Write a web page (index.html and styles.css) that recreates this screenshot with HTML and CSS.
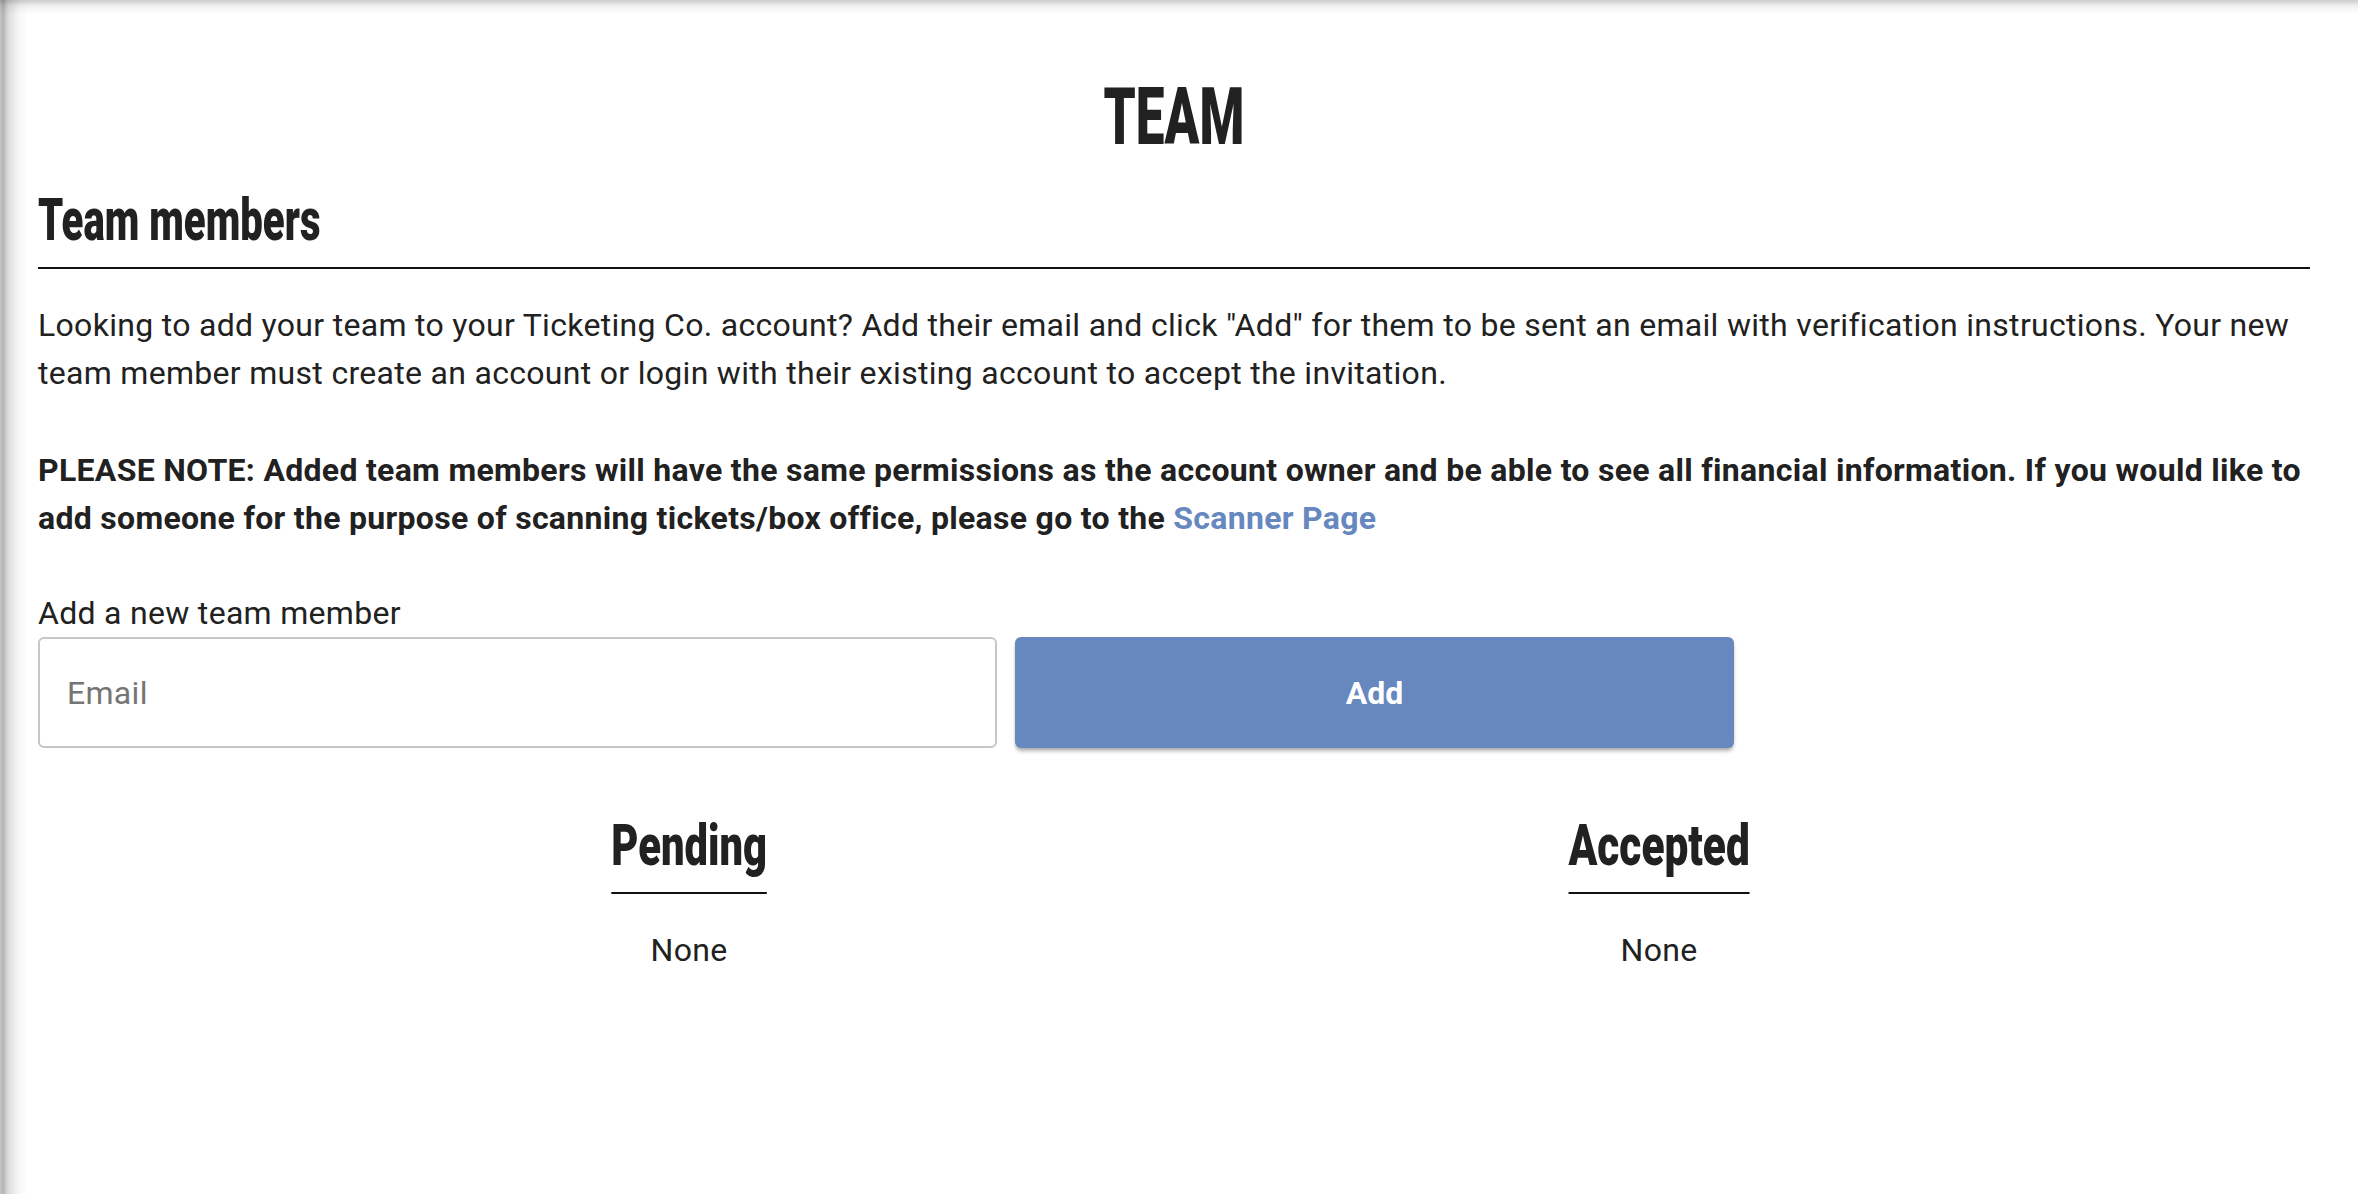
FILE: index.html
```html
<!DOCTYPE html>
<html lang="en">
<head>
<meta charset="utf-8">
<title>Team</title>
<link rel="stylesheet" href="styles.css">
</head>
<body>
<div class="page">
  <main class="content">
    <h1 class="title"><span class="cond cond-team">TEAM</span></h1>
    <h2 class="section-title"><span class="cond cond-members">Team members</span></h2>
    <p class="intro">Looking to add your team to your Ticketing Co. account? Add their email and click "Add" for them to be sent an email with verification instructions. Your new team member must create an account or login with their existing account to accept the invitation.</p>
    <p class="note">PLEASE NOTE: Added team members will have the same permissions as the account owner and be able to see all financial information. If you would like to add someone for the purpose of scanning tickets/box office, please go to the <a class="link" href="#">Scanner Page</a></p>
    <form class="add-form">
      <label class="add-label" for="email">Add a new team member</label>
      <div class="add-row">
        <input class="email-input" id="email" type="email" placeholder="Email">
        <button class="add-btn" type="button">Add</button>
      </div>
    </form>
    <div class="lists">
      <section class="list">
        <h3 class="list-title cond cond-pending">Pending</h3>
        <p class="list-empty">None</p>
      </section>
      <section class="list">
        <h3 class="list-title cond cond-accepted">Accepted</h3>
        <p class="list-empty">None</p>
      </section>
    </div>
  </main>
</div>
</body>
</html>
```
FILE: styles.css
```css
html, body {
  margin: 0;
  height: 100%;
}
body {
  font-family: Roboto, "Liberation Sans", sans-serif;
  color: #212121;
  background: #fff;
}
.page {
  min-height: 100vh;
  box-sizing: border-box;
  padding: 77px 48px 0 38px;
  background:
    linear-gradient(to bottom, rgba(0,0,0,0.2), rgba(0,0,0,0.06) 6px, rgba(0,0,0,0)) top left / 100% 14px no-repeat,
    linear-gradient(to right, rgba(0,0,0,0.22) 0, rgba(0,0,0,0.3) 3px, rgba(0,0,0,0.14) 8px, rgba(0,0,0,0.04) 18px, rgba(0,0,0,0) 28px) top left / 30px 100% no-repeat,
    #fff;
}
.title, .section-title, .list-title {
  font-family: Roboto, "Liberation Sans", sans-serif;
  font-weight: 900;
  color: #212121;
  margin: 0;
}
.cond {
  display: inline-block;
}
.cond-team {
  transform: scaleX(0.64);
  transform-origin: center;
}
.cond-members {
  transform: scaleX(0.68);
  transform-origin: left center;
}
.cond-pending {
  transform: scaleX(0.72);
  transform-origin: center;
}
.cond-accepted {
  transform: scaleX(0.73);
  transform-origin: center;
}
.title {
  font-size: 80px;
  line-height: 80px;
  text-align: center;
}
.section-title {
  font-size: 59px;
  line-height: 59px;
  margin-top: 33px;
  padding-bottom: 18px;
  border-bottom: 2px solid #111;
}
p {
  margin: 0;
  font-size: 32px;
  line-height: 48px;
  letter-spacing: 0.3px;
}
.intro {
  margin-top: 32px;
}
.note {
  margin-top: 49px;
  font-weight: 700;
}
.link {
  color: #6787bf;
  text-decoration: none;
}
.add-form {
  margin-top: 47px;
  width: 1696px;
}
.add-label {
  display: block;
  font-size: 32px;
  line-height: 48px;
  letter-spacing: 0.3px;
}
.add-row {
  display: grid;
  grid-template-columns: 4fr 3fr;
  gap: 18px;
}
.email-input {
  min-width: 0;
  height: 111px;
  box-sizing: border-box;
  border: 2px solid #c6c6c6;
  border-radius: 6px;
  padding: 0 27px;
  font-family: Roboto, "Liberation Sans", sans-serif;
  font-size: 32px;
  letter-spacing: 0.3px;
  color: #212121;
  background: #fff;
  outline: none;
}
.email-input::placeholder {
  color: #757575;
}
.add-btn {
  min-width: 0;
  height: 111px;
  border: none;
  border-radius: 6px;
  background: #6787bf;
  color: #fff;
  font-family: Roboto, "Liberation Sans", sans-serif;
  font-size: 32px;
  font-weight: 700;
  box-shadow: 0 4px 4px -1px rgba(0,0,0,0.28), 0 2px 3px rgba(0,0,0,0.08);
  cursor: pointer;
}
.lists {
  width: 1940px;
  margin: 68px auto 0;
  display: grid;
  grid-template-columns: 1fr 1fr;
}
.list {
  text-align: center;
}
.list-title {
  font-size: 58px;
  line-height: 58px;
  padding-bottom: 18px;
  border-bottom: 2px solid #111;
}
.list-empty {
  margin-top: 32px;
}
```
